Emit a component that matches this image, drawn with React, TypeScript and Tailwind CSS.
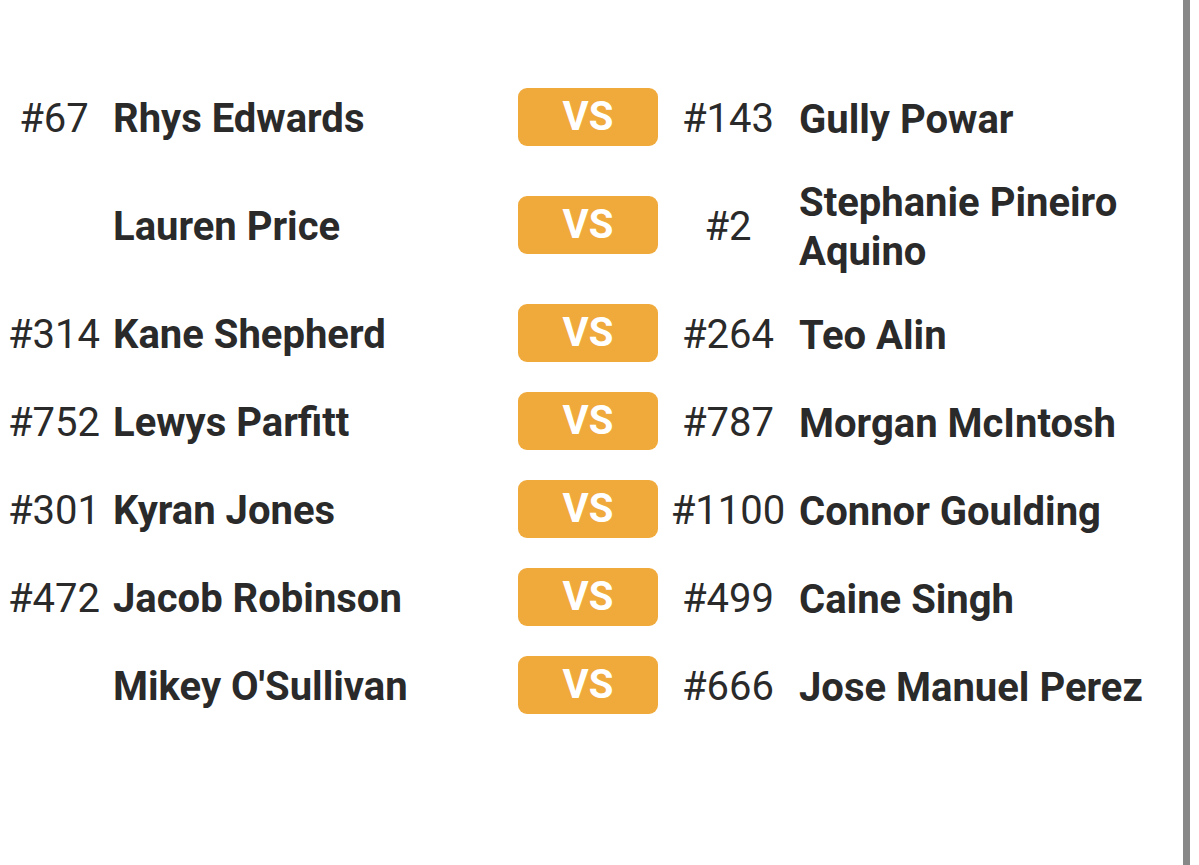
const matches = [
  { a: { rank: "#67", name: "Rhys Edwards" }, b: { rank: "#143", name: "Gully Powar" } },
  { a: { rank: "", name: "Lauren Price" }, b: { rank: "#2", name: "Stephanie Pineiro Aquino" } },
  { a: { rank: "#314", name: "Kane Shepherd" }, b: { rank: "#264", name: "Teo Alin" } },
  { a: { rank: "#752", name: "Lewys Parfitt" }, b: { rank: "#787", name: "Morgan McIntosh" } },
  { a: { rank: "#301", name: "Kyran Jones" }, b: { rank: "#1100", name: "Connor Goulding" } },
  { a: { rank: "#472", name: "Jacob Robinson" }, b: { rank: "#499", name: "Caine Singh" } },
  { a: { rank: "", name: "Mikey O'Sullivan" }, b: { rank: "#666", name: "Jose Manuel Perez" } },
];

export default function App() {
  return (
    <div className="flex h-[865px] w-[1199px] overflow-hidden bg-white font-['Roboto',sans-serif] text-[#2a2a2a]">
      <main className="w-[1183px] pt-[73px]">
        {matches.map((m, i) => (
          <div key={i} className="flex items-center py-[15px] text-[40px] leading-[48px]">
            <span className="w-[108px] shrink-0 translate-y-[2px] text-center">{m.a.rank}</span>
            <span className="ml-[5px] w-[405px] shrink-0 translate-y-[2px] font-bold">{m.a.name}</span>
            <span className="flex h-[58px] w-[140px] shrink-0 items-center justify-center rounded-[9px] bg-[#f0aa3c] text-[40px] font-bold text-white">
              VS
            </span>
            <span className="ml-[4px] w-[132px] shrink-0 translate-y-[2px] text-center">{m.b.rank}</span>
            <span className="ml-[5px] w-[376px] shrink-0 translate-y-[2px] font-bold leading-[49px]">{m.b.name}</span>
          </div>
        ))}
      </main>
      <div className="w-[7px] shrink-0 bg-[#888888]" />
    </div>
  );
}
